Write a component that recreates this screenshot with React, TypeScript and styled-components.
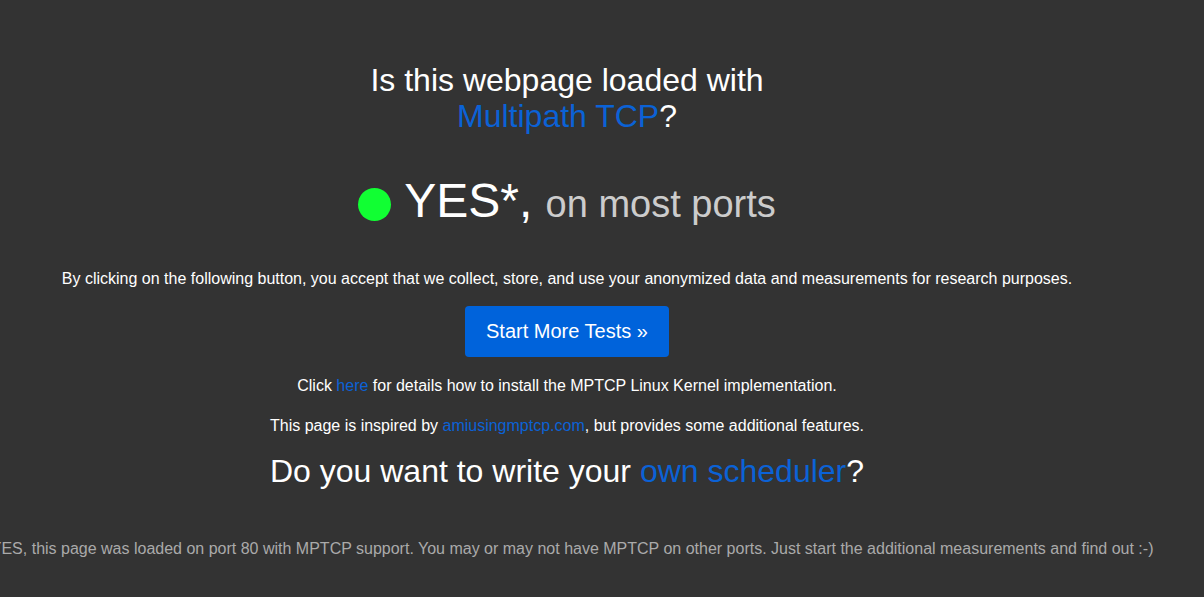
import React from "react";
import styled, { createGlobalStyle } from "styled-components";

const Global = createGlobalStyle`
  html, body { margin: 0; padding: 0; background: #333333; }
  body { font-family: "Liberation Sans", Arial, sans-serif; color: #ffffff; overflow: hidden; }
`;

const Page = styled.div`
  width: 1134px;
  display: flex;
  flex-direction: column;
  align-items: center;
  text-align: center;
  padding-top: 62px;
`;

const Title = styled.h1`
  margin: 0;
  font-size: 32px;
  line-height: 36px;
  font-weight: normal;
  color: #ffffff;
`;

const Link = styled.a`
  color: #0b62d6;
  text-decoration: none;
`;

const Status = styled.div`
  margin-top: 40px;
  display: flex;
  align-items: center;
  gap: 13px;
  height: 56px;
`;

const Dot = styled.span`
  width: 33px;
  height: 33px;
  border-radius: 50%;
  background: #11ff33;
  display: inline-block;
  margin-top: 4px;
`;

const StatusText = styled.span`
  font-size: 48px;
  line-height: 56px;
  color: #ffffff;
`;

const StatusSub = styled.span`
  font-size: 38px;
  color: #cccccc;
`;

const Para = styled.p<{ $top: number }>`
  margin: ${(p) => p.$top}px 0 0;
  font-size: 16px;
  line-height: 20px;
  color: #ffffff;
  white-space: nowrap;
`;

const Button = styled.button`
  margin-top: 17px;
  width: 204px;
  height: 51px;
  border: none;
  border-radius: 4px;
  background: #0063db;
  color: #ffffff;
  font-family: "Liberation Sans", Arial, sans-serif;
  font-size: 20px;
  cursor: pointer;
`;

const Heading = styled.h2`
  margin: 17px 0 0;
  font-size: 32px;
  line-height: 36px;
  font-weight: normal;
  color: #ffffff;
`;

const Footnote = styled.p`
  margin: 50px 0 0;
  padding-left: 4px;
  font-size: 16px;
  line-height: 20px;
  color: #aaaaaa;
  white-space: nowrap;
`;

export default function App() {
  return (
    <>
      <Global />
      <Page>
        <Title>
          Is this webpage loaded with
          <br />
          <Link href="#">Multipath TCP</Link>?
        </Title>
        <Status>
          <Dot />
          <StatusText>
            YES*, <StatusSub>on most ports</StatusSub>
          </StatusText>
        </Status>
        <Para $top={39}>
          By clicking on the following button, you accept that we collect, store, and use your anonymized data and
          measurements for research purposes.
        </Para>
        <Button>Start More Tests »</Button>
        <Para $top={19}>
          Click <Link href="#">here</Link> for details how to install the MPTCP Linux Kernel implementation.
        </Para>
        <Para $top={20}>
          This page is inspired by <Link href="#">amiusingmptcp.com</Link>, but provides some additional features.
        </Para>
        <Heading>
          Do you want to write your <Link href="#">own scheduler</Link>?
        </Heading>
        <Footnote>
          *YES, this page was loaded on port 80 with MPTCP support. You may or may not have MPTCP on other ports. Just
          start the additional measurements and find out :-)
        </Footnote>
      </Page>
    </>
  );
}
